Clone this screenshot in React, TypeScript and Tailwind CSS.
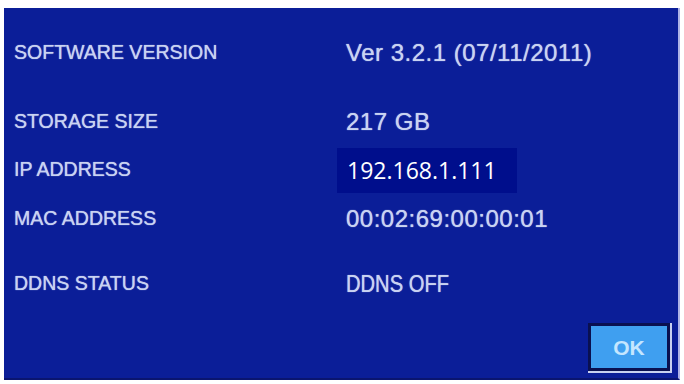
import React from "react";

const rows: { label: string; value: string; mt: string; ip?: boolean; narrow?: boolean }[] = [
  { label: "SOFTWARE VERSION", value: "Ver 3.2.1 (07/11/2011)", mt: "mt-[25px]" },
  { label: "STORAGE SIZE", value: "217 GB", mt: "mt-[29px]" },
  { label: "IP ADDRESS", value: "192.168.1.111", mt: "mt-[8px]", ip: true },
  { label: "MAC ADDRESS", value: "00:02:69:00:00:01", mt: "mt-[9px]" },
  { label: "DDNS STATUS", value: "DDNS OFF", mt: "mt-[25px]", narrow: true },
];

export default function App() {
  return (
    <div className="w-[684px] h-[384px] bg-white pt-[8px] pl-[4px] pr-[4px] pb-[4px]" style={{ fontFamily: '"Liberation Sans", Arial, sans-serif' }}>
      <div className="w-full h-full bg-[#0b1e98] border-r-[2px] border-r-[#aeb3e6] border-b-[2px] border-b-[#0a1570] flex flex-col">
        {rows.map((r) => (
          <div key={r.label} className={`${r.mt} h-[40px] flex items-center`}>
            <div className="w-[342px] pl-[10px] shrink-0">
              <span className="inline-block origin-left scale-x-[0.93] text-[#c9d3f2] text-[21px] leading-none whitespace-nowrap [text-shadow:0_0_1px_#c9d3f2]">
                {r.label}
              </span>
            </div>
            {r.ip ? (
              <div className="-ml-[9px] w-[180px] h-[45px] bg-[#000e8c] flex items-center pl-[10px] text-white text-[23px] leading-none" style={{ fontFamily: '"Open Sans", sans-serif' }}>
                {r.value}
              </div>
            ) : r.narrow ? (
              <span className="inline-block origin-left scale-x-[0.84] text-[#c9d3f2] text-[24px] leading-none whitespace-nowrap [text-shadow:0_0_1px_#c9d3f2]">{r.value}</span>
            ) : (
              <div className="text-[#c9d3f2] text-[24px] tracking-[0.5px] leading-none whitespace-nowrap [text-shadow:0_0_1px_#c9d3f2]">{r.value}</div>
            )}
          </div>
        ))}
        <div className="mt-[19px] flex justify-end pr-[6px]">
          <div className="w-[84px] h-[50px] bg-[#0a1050] border-r-[2px] border-b-[2px] border-r-[#c8d0f0] border-b-[#c8d0f0] p-[3px]">
            <div className="w-full h-full bg-[#3f9ff0] flex items-center justify-center text-[#c4e6ff] text-[21px] font-bold leading-none">
              OK
            </div>
          </div>
        </div>
      </div>
    </div>
  );
}
